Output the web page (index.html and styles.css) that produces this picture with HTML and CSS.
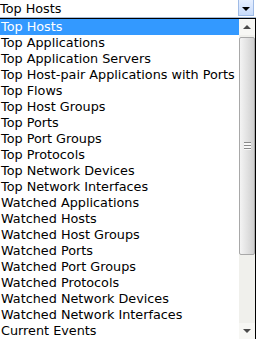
FILE: index.html
```html
<!DOCTYPE html>
<html lang="en">
<head>
    <meta charset="UTF-8">
    <title>Report Picker</title>
    <link rel="stylesheet" href="styles.css">
</head>
<body>
    <div class="combo">
        <div class="combo-field">
            <span class="combo-value">Top Hosts</span>
            <span class="combo-btn"><span class="arrow-down"></span></span>
        </div>
        <div class="dropdown">
            <ul class="options">
                <li class="selected">Top Hosts</li>
                <li>Top Applications</li>
                <li>Top Application Servers</li>
                <li>Top Host-pair Applications with Ports</li>
                <li>Top Flows</li>
                <li>Top Host Groups</li>
                <li>Top Ports</li>
                <li>Top Port Groups</li>
                <li>Top Protocols</li>
                <li>Top Network Devices</li>
                <li>Top Network Interfaces</li>
                <li>Watched Applications</li>
                <li>Watched Hosts</li>
                <li>Watched Host Groups</li>
                <li>Watched Ports</li>
                <li>Watched Port Groups</li>
                <li>Watched Protocols</li>
                <li>Watched Network Devices</li>
                <li>Watched Network Interfaces</li>
                <li>Current Events</li>
            </ul>
            <div class="scrollbar">
                <div class="sb-btn"><span class="tri-up"></span></div>
                <div class="sb-track">
                    <div class="sb-thumb">
                        <div class="grip"></div>
                    </div>
                </div>
                <div class="sb-btn"><span class="tri-down"></span></div>
            </div>
        </div>
    </div>
</body>
</html>
```

FILE: styles.css
```css
html, body {
    margin: 0;
    padding: 0;
    background: #fff;
    overflow: hidden;
}
body {
    width: 256px;
    height: 339px;
    font-family: "DejaVu Sans", Verdana, sans-serif;
    font-size: 12.8px;
    color: #000;
}
.combo {
    margin-left: -1px;
    width: 257px;
}
.combo-field {
    display: flex;
    height: 17px;
    border-bottom: 1px solid #a9bcd6;
    background: #fff;
}
.combo-value {
    flex: 1;
    padding-left: 1px;
    line-height: 17px;
}
.combo-btn {
    width: 14px;
    height: 15px;
    margin-right: 2px;
    border: 1px solid #9fbbe6;
    border-top: none;
    background: linear-gradient(#e6efff, #c9dcfb);
    display: flex;
    align-items: center;
    justify-content: center;
}
.arrow-down {
    width: 0;
    height: 0;
    border-left: 4px solid transparent;
    border-right: 4px solid transparent;
    border-top: 4px solid #000;
    margin-top: 2px;
}
.dropdown {
    display: flex;
    border: 1px solid #000;
    border-bottom: none;
    height: 320px;
    overflow: hidden;
}
.options {
    list-style: none;
    margin: 0;
    padding: 0;
    flex: 1;
}
.options li {
    height: 16px;
    line-height: 16px;
    padding-left: 1px;
    white-space: nowrap;
}
.options li.selected {
    background: #3399ff;
    color: #fff;
}
.scrollbar {
    width: 16px;
    display: flex;
    flex-direction: column;
    background: #f0f0ec;
}
.sb-btn {
    height: 16px;
    display: flex;
    align-items: center;
    justify-content: center;
    background: #f7f7f4;
}
.tri-up, .tri-down {
    width: 0;
    height: 0;
    border-left: 4px solid transparent;
    border-right: 4px solid transparent;
}
.tri-up {
    border-bottom: 4px solid #4a4a4a;
}
.tri-down {
    border-top: 4px solid #4a4a4a;
}
.sb-track {
    flex: 1;
    padding-top: 2px;
}
.sb-thumb {
    height: 216px;
    border: 1px solid #a8a8a8;
    border-radius: 2px;
    background: linear-gradient(90deg, #f4f4f4, #e2e2e2 50%, #cfcfcf);
    display: flex;
    align-items: center;
    justify-content: center;
}
.grip {
    width: 7px;
    height: 8px;
    background: repeating-linear-gradient(#8a8a8a 0 1px, #f8f8f8 1px 3px);
}
```
